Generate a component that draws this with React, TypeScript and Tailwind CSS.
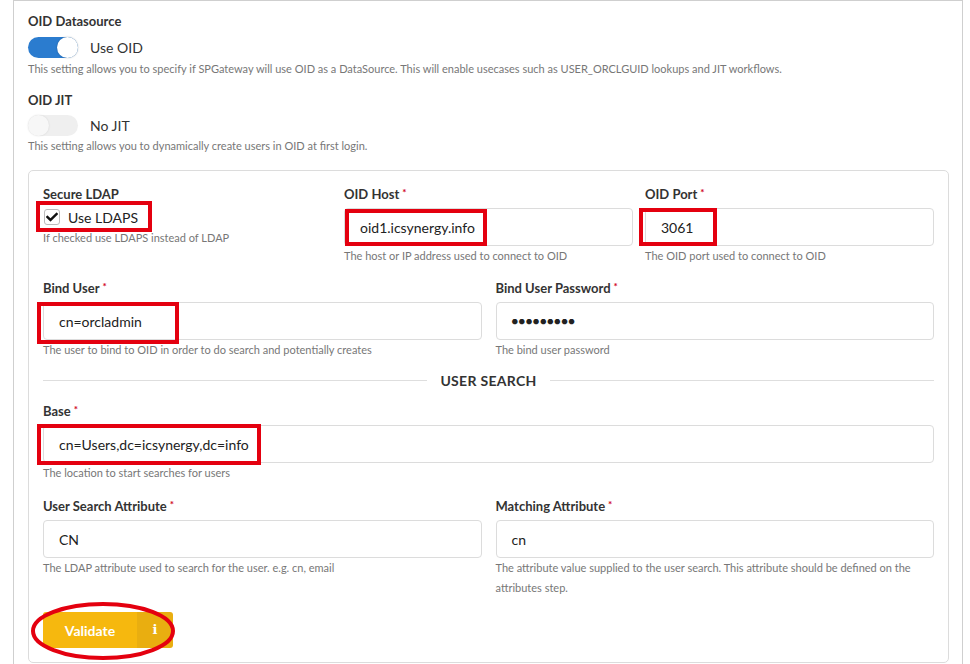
import React from "react";

function Req() {
  return <span className="text-[#d0021b] text-[10px] align-top relative -top-[2px] ml-[3px]">*</span>;
}

function Field({
  label,
  required,
  value,
  help,
  password,
}: {
  label: string;
  required?: boolean;
  value: string;
  help: string;
  password?: boolean;
}) {
  return (
    <div className="flex flex-col">
      <div className="h-[20px] leading-[20px] text-[13px] font-bold text-[#333]">
        {label}
        {required && <Req />}
      </div>
      <div className="mt-[4px] h-[38px] border border-[#dcdcdc] rounded-[4px] bg-white flex items-center px-[15px] text-[14px] text-[#222]">
        {password ? <span className="tracking-[0.5px] text-[11px] font-bold">●●●●●●●●●</span> : value}
      </div>
      <div className="leading-[20px] text-[11px] text-[#777]">{help}</div>
    </div>
  );
}

function Toggle({ on }: { on: boolean }) {
  return (
    <div
      className={
        on
          ? "w-[50px] h-[21px] rounded-full bg-[#2b7ccf] flex justify-end items-center"
          : "w-[50px] h-[21px] rounded-full bg-[#efefef] flex justify-start items-center"
      }
    >
      <div
        className={
          on
            ? "w-[21px] h-[21px] rounded-full bg-white shadow-[0_0_2px_rgba(0,0,0,0.25)]"
            : "w-[21px] h-[21px] rounded-full bg-[#f7f7f7] shadow-[0_0_2px_rgba(0,0,0,0.12)]"
        }
      />
    </div>
  );
}

function RedBox({ className }: { className: string }) {
  return <div className={"absolute border-[4px] border-[#e4000f] pointer-events-none " + className} />;
}

export default function App() {
  return (
    <div className="relative w-[970px] h-[664px] bg-white overflow-hidden font-['Lato','Noto_Sans',sans-serif] text-[#333]">
      <div className="ml-[13px] w-[950px] h-[700px] border-l border-r border-t border-[#cfcfcf] pl-[14px] pr-[13px] pt-[10px]">
        <div className="h-[20px] leading-[20px] text-[13px] font-bold">OID Datasource</div>
        <div className="mt-[6px] flex items-center gap-[12px]">
          <Toggle on />
          <span className="text-[14px]">Use OID</span>
        </div>
        <div className="mt-[1px] leading-[20px] text-[11px] text-[#777]">
          This setting allows you to specify if SPGateway will use OID as a DataSource. This will enable usecases such as USER_ORCLGUID lookups and JIT workflows.
        </div>

        <div className="mt-[11px] h-[20px] leading-[20px] text-[13px] font-bold">OID JIT</div>
        <div className="mt-[5px] flex items-center gap-[12px]">
          <Toggle on={false} />
          <span className="text-[14px]">No JIT</span>
        </div>
        <div className="mt-[0px] leading-[20px] text-[11px] text-[#777]">
          This setting allows you to dynamically create users in OID at first login.
        </div>

        <div className="mt-[14px] border border-[#dcdcdc] rounded-[5px] px-[14px] pt-[13px] pb-[14px]">
          <div className="grid grid-cols-3 gap-x-[12px]">
            <div className="flex flex-col">
              <div className="h-[20px] leading-[20px] text-[13px] font-bold">Secure LDAP</div>
              <div className="mt-[3px] h-[20px] flex items-center gap-[8px] pl-[1px]">
                <div className="w-[16px] h-[16px] border border-[#bbb] rounded-[3px] bg-white flex items-center justify-center">
                  <svg viewBox="0 0 512 512" className="w-[12px] h-[12px]">
                    <path
                      fill="#111"
                      d="M173.9 439.4l-166.4-166.4c-10-10-10-26.2 0-36.2l36.2-36.2c10-10 26.2-10 36.2 0L192 312.7 432.1 72.6c10-10 26.2-10 36.2 0l36.2 36.2c10 10 10 26.2 0 36.2l-294.4 294.4c-10 10-26.2 10-36.2 0z"
                    />
                  </svg>
                </div>
                <span className="text-[14px] text-[#222]">Use LDAPS</span>
              </div>
              <div className="mt-[1px] leading-[20px] text-[11px] text-[#777]">If checked use LDAPS instead of LDAP</div>
            </div>
            <Field label="OID Host" required value="oid1.icsynergy.info" help="The host or IP address used to connect to OID" />
            <Field label="OID Port" required value="3061" help="The OID port used to connect to OID" />
          </div>

          <div className="mt-[12px] grid grid-cols-2 gap-x-[14px]">
            <Field label="Bind User" required value="cn=orcladmin" help="The user to bind to OID in order to do search and potentially creates" />
            <Field label="Bind User Password" required value="" password help="The bind user password" />
          </div>

          <div className="mt-[10px] h-[20px] flex items-center gap-[13px]">
            <div className="flex-1 h-px bg-[#dedede]" />
            <div className="text-[14px] font-bold tracking-[0.3px] text-[#333]">USER SEARCH</div>
            <div className="flex-1 h-px bg-[#dedede]" />
          </div>

          <div className="mt-[11px]">
            <Field label="Base" required value="cn=Users,dc=icsynergy,dc=info" help="The location to start searches for users" />
          </div>

          <div className="mt-[13px] grid grid-cols-2 gap-x-[14px]">
            <Field label="User Search Attribute" required value="CN" help="The LDAP attribute used to search for the user. e.g. cn, email" />
            <Field
              label="Matching Attribute"
              required
              value="cn"
              help="The attribute value supplied to the user search. This attribute should be defined on the attributes step."
            />
          </div>

          <div className="mt-[14px] flex">
            <div className="h-[36px] flex rounded-[3px] overflow-hidden text-white text-[14px] font-bold">
              <div className="w-[94px] bg-[#f6b80e] flex items-center justify-center">Validate</div>
              <div className="w-[36px] bg-[#e9ae10] flex items-center justify-center font-['DejaVu_Serif',serif] text-[13px]">i</div>
            </div>
          </div>
        </div>
      </div>

      <RedBox className="left-[36px] top-[201px] w-[116px] h-[31px]" />
      <RedBox className="left-[345px] top-[209px] w-[142px] h-[37px]" />
      <RedBox className="left-[639px] top-[208px] w-[78px] h-[38px]" />
      <RedBox className="left-[37px] top-[302px] w-[142px] h-[42px]" />
      <RedBox className="left-[37px] top-[424px] w-[224px] h-[41px]" />
      <svg className="absolute left-[30px] top-[601px] pointer-events-none" width="146" height="60" viewBox="0 0 146 60">
        <ellipse cx="73" cy="30" rx="70" ry="27" fill="none" stroke="#e4000f" strokeWidth="4" />
      </svg>
    </div>
  );
}
